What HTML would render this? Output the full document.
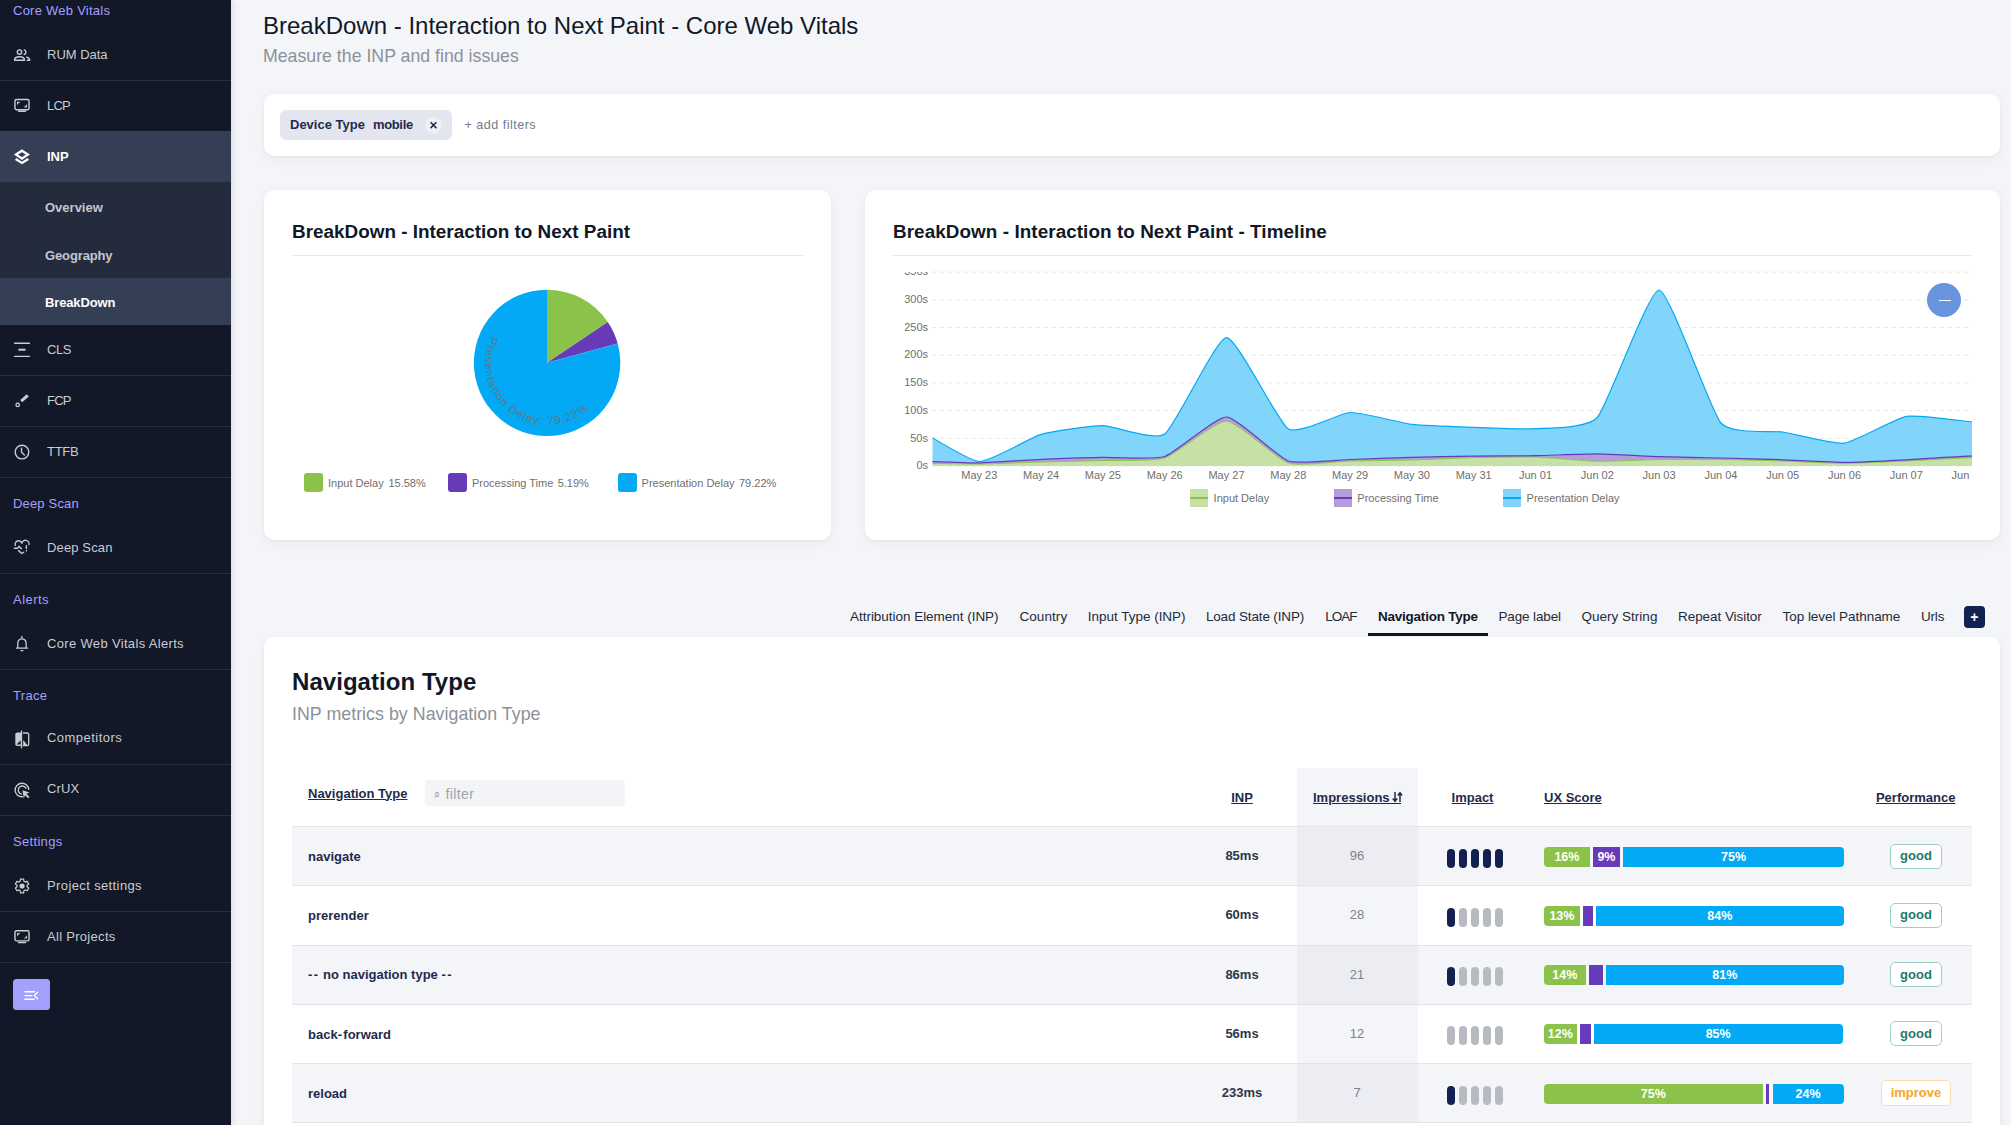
<!DOCTYPE html><html><head><meta charset="utf-8"><style>
html,body{margin:0;padding:0}
body{width:2011px;height:1125px;overflow:hidden;background:#f4f5f9;font-family:"Liberation Sans",sans-serif;position:relative}
.t{position:absolute;line-height:20px;white-space:nowrap}
.abs{position:absolute}
.sb{position:absolute;left:0;top:0;width:231px;height:1125px;background:#121827;box-shadow:1px 0 7px rgba(0,0,0,0.13)}
.div{position:absolute;left:0;width:231px;height:1px;background:#262e3f}
.card{position:absolute;background:#fff;border-radius:10px;box-shadow:0 1px 3px rgba(20,30,60,.06),0 4px 14px rgba(20,30,60,.04)}
</style></head><body>

<div class="sb"></div>
<div class="abs" style="left:0;top:131px;width:231px;height:51px;background:#343e55"></div>
<div class="abs" style="left:0;top:182px;width:231px;height:96px;background:#242b3c"></div>
<div class="abs" style="left:0;top:278px;width:231px;height:47px;background:#343e55"></div>
<div class="div" style="top:80px"></div>
<div class="div" style="top:375px"></div>
<div class="div" style="top:426px"></div>
<div class="div" style="top:477px"></div>
<div class="div" style="top:573px"></div>
<div class="div" style="top:669px"></div>
<div class="div" style="top:764px"></div>
<div class="div" style="top:815px"></div>
<div class="div" style="top:911px"></div>
<div class="div" style="top:962px"></div>
<div class="t" style="left:13px;top:0.8000000000000007px;font-size:13px;color:#a4a0fb;font-weight:normal;letter-spacing:0.253px;">Core Web Vitals</div>
<div class="t" style="left:13px;top:493.8px;font-size:13px;color:#a4a0fb;font-weight:normal;letter-spacing:0.172px;">Deep Scan</div>
<div class="t" style="left:13px;top:590.0px;font-size:13px;color:#a4a0fb;font-weight:normal;letter-spacing:0.474px;">Alerts</div>
<div class="t" style="left:13px;top:685.8px;font-size:13px;color:#a4a0fb;font-weight:normal;letter-spacing:0.313px;">Trace</div>
<div class="t" style="left:13px;top:832.0px;font-size:13px;color:#a4a0fb;font-weight:normal;letter-spacing:0.318px;">Settings</div>
<div class="t" style="left:47px;top:44.6px;font-size:13px;color:#c9ccd3;font-weight:normal;letter-spacing:-0.011px;">RUM Data</div>
<div class="t" style="left:47px;top:95.9px;font-size:13px;color:#c9ccd3;font-weight:normal;letter-spacing:-0.845px;">LCP</div>
<div class="t" style="left:47px;top:339.9px;font-size:13px;color:#c9ccd3;font-weight:normal;letter-spacing:-0.395px;">CLS</div>
<div class="t" style="left:47px;top:390.7px;font-size:13px;color:#c9ccd3;font-weight:normal;letter-spacing:-0.751px;">FCP</div>
<div class="t" style="left:47px;top:441.7px;font-size:13px;color:#c9ccd3;font-weight:normal;letter-spacing:-0.265px;">TTFB</div>
<div class="t" style="left:47px;top:537.6px;font-size:13px;color:#c9ccd3;font-weight:normal;letter-spacing:0.135px;">Deep Scan</div>
<div class="t" style="left:47px;top:633.8px;font-size:13px;color:#c9ccd3;font-weight:normal;letter-spacing:0.334px;">Core Web Vitals Alerts</div>
<div class="t" style="left:47px;top:728.4px;font-size:13px;color:#c9ccd3;font-weight:normal;letter-spacing:0.472px;">Competitors</div>
<div class="t" style="left:47px;top:779.4px;font-size:13px;color:#c9ccd3;font-weight:normal;letter-spacing:0.141px;">CrUX</div>
<div class="t" style="left:47px;top:875.7px;font-size:13px;color:#c9ccd3;font-weight:normal;letter-spacing:0.382px;">Project settings</div>
<div class="t" style="left:47px;top:926.6px;font-size:13px;color:#c9ccd3;font-weight:normal;letter-spacing:0.298px;">All Projects</div>
<div class="t" style="left:47px;top:146.5px;font-size:13px;color:#ffffff;font-weight:bold;">INP</div>
<div class="t" style="left:45px;top:197.5px;font-size:13px;color:#c3c7cf;font-weight:bold;">Overview</div>
<div class="t" style="left:45px;top:245.5px;font-size:13px;color:#c3c7cf;font-weight:bold;letter-spacing:-0.128px;">Geography</div>
<div class="t" style="left:45px;top:293.2px;font-size:13px;color:#ffffff;font-weight:bold;letter-spacing:-0.140px;">BreakDown</div>
<svg class="abs" style="left:0;top:0" width="231" height="1125" viewBox="0 0 231 1125"><g fill="none" stroke="#c9ccd3" stroke-width="1.4" stroke-linecap="round" stroke-linejoin="round"><circle cx="19.5" cy="52.1" r="2.2"/><path d="M14.5 60.3C14.5 57.9 16.6 56.8 19.5 56.8C22.4 56.8 24.5 57.9 24.5 60.3Z"/><path d="M24.2 49.9A2.4 2.4 0 0 1 24.2 54.5"/><path d="M26.6 57.1C28.4 57.6 29.7 58.7 29.7 60.3H27.2"/><g transform="translate(0 0)"><rect x="15" y="99.5" width="14" height="10.2" rx="1.4"/><path d="M18.6 111.3H25.4" stroke-width="1.6"/><path d="M17.6 104V102.4H19.2M26.4 105.2V106.8H24.8" stroke-width="1.2"/></g><g transform="translate(0 831.2)"><rect x="15" y="99.5" width="14" height="10.2" rx="1.4"/><path d="M18.6 111.3H25.4" stroke-width="1.6"/><path d="M17.6 104V102.4H19.2M26.4 105.2V106.8H24.8" stroke-width="1.2"/></g><path d="M14.6 343.3H29.4M14.6 356.4H29.4"/><path d="M18.4 349.7H25.6" stroke-width="2" stroke-linecap="butt"/><path d="M21.2 401.2L27.8 395.4" stroke-width="3" stroke-linecap="butt"/><circle cx="17.7" cy="404.9" r="1.7" stroke-width="1.3"/><circle cx="22" cy="452.1" r="6.8"/><path d="M21.5 448.2V452.3L24.4 455"/><path d="M15.3 545.4A3.4 3.4 0 0 1 21.9 543.2A3.4 3.4 0 0 1 29 544.6"/><path d="M14.3 548.3H17.5L19 546.3L21.3 548.7"/><path d="M18.5 550.6L21.9 553.5L23.7 552.2"/><path d="M26.4 545.8V548.6M26.4 550.8V550.9"/><path d="M21.9 636.5V638M17.8 648V643A4.1 4.1 0 0 1 26.1 643V648M16.4 648.2H27.6M20.9 650.6H22.9" stroke-width="1.3"/><path d="M21.5 732.6H17.1Q15.3 732.6 15.3 734.4V744.2Q15.3 746 17.1 746H21.5Z" fill="#c9ccd3" stroke="none"/><path d="M16.6 744.6L20.8 740.2V744.6Z" fill="#121827" stroke="none"/><path d="M21.5 731V747.8" stroke-width="1.3"/><path d="M23.4 733H27.1Q28.7 733 28.7 734.6V744.1Q28.7 745.7 27.1 745.7H23.4" stroke-width="1.3"/><path d="M23.2 740L27.8 745.8H23.2Z" fill="#c9ccd3" stroke="none"/><path d="M28.7 789.4A6.8 6.8 0 1 0 22.4 796.8"/><path d="M25.9 788.1A4.1 4.1 0 1 0 21.4 794.1"/><path d="M22.4 790.2L29.6 792.6L26.4 793.8L29.5 796.9L28.1 798.3L25 795.2L23.8 798.4Z" fill="#c9ccd3" stroke="none"/><path d="M20.22 881.24L20.48 879.18L23.62 879.18L23.88 881.24L25.26 882.04L27.17 881.23L28.74 883.95L27.09 885.20L27.09 886.80L28.74 888.05L27.17 890.77L25.26 889.96L23.88 890.76L23.62 892.82L20.48 892.82L20.22 890.76L18.84 889.96L16.93 890.77L15.36 888.05L17.01 886.80L17.01 885.20L15.36 883.95L16.93 881.23L18.84 882.04Z" stroke-width="1.3"/><circle cx="22.05" cy="886" r="2.6" fill="#c9ccd3" stroke="none"/></g><g fill="none" stroke="#fff" stroke-width="2.3" stroke-linejoin="miter"><path d="M21.95 150.7L27.9 154.6L21.95 158.5L16 154.6Z"/><path d="M15.6 159L21.95 162.9L28.3 159"/></g><rect x="13" y="979" width="37" height="31" rx="3.5" fill="#a3a0fd"/><g stroke="#fff" stroke-width="1.4" stroke-linecap="round" stroke-linejoin="round" fill="none"><path d="M24.9 991.7H34.3M24.9 995.6H31.9M24.9 999.2H34.3M37.5 992.3L34.3 995.6L37.5 998.8"/></g></svg>
<div class="t" style="left:263px;top:15.5px;font-size:24px;color:#111827;font-weight:normal;">BreakDown - Interaction to Next Paint - Core Web Vitals</div>
<div class="t" style="left:263px;top:45.8px;font-size:17.7px;color:#8b919a;font-weight:normal;letter-spacing:0.017px;">Measure the INP and find issues</div>
<div class="card" style="left:264px;top:94px;width:1736px;height:62px"></div>
<div class="abs" style="left:280px;top:110px;width:172px;height:30px;border-radius:6px;background:#e3e6ee"></div>
<div class="t" style="left:290px;top:114.5px;font-size:13px;color:#1f2b4d;font-weight:bold;">Device Type</div>
<div class="t" style="left:372.9px;top:114.5px;font-size:13px;color:#1f2b4d;font-weight:bold;letter-spacing:-0.319px;">mobile</div>
<div class="abs" style="left:424.9px;top:116.5px;width:17.2px;height:17.2px;border-radius:50%;background:#eef0f4"></div>
<svg class="abs" style="left:0;top:0" width="500" height="200"><path d="M430.6 122.3L436.4 128.1M436.4 122.3L430.6 128.1" stroke="#1f2b4d" stroke-width="1.5"/></svg>
<div class="t" style="left:464.5px;top:114.8px;font-size:12.6px;color:#737b8b;font-weight:normal;letter-spacing:0.476px;">+ add filters</div>
<div class="card" style="left:264px;top:190px;width:567px;height:350px"></div>
<div class="t" style="left:292px;top:221.5px;font-size:18.9px;color:#111827;font-weight:bold;">BreakDown - Interaction to Next Paint</div>
<div class="abs" style="left:292px;top:255px;width:511px;height:1px;background:#e5e7eb"></div>
<svg class="abs" style="left:0;top:0" width="2011" height="1125" viewBox="0 0 2011 1125"><path d="M547.05 362.85L547.05 289.65A73.2 73.2 0 0 1 607.80 322.01Z" fill="#8bc34a"/><path d="M547.05 362.85L607.80 322.01A73.2 73.2 0 0 1 617.68 343.62Z" fill="#673ab7"/><path d="M547.05 362.85L617.68 343.62A73.2 73.2 0 1 1 547.05 289.65Z" fill="#03a9f4"/><path id="lp" d="M491.09 336.16A62 62 0 0 0 600.74 393.85" fill="none"/><text font-family="Liberation Sans" font-size="11.5" letter-spacing="1.08" fill="#6e6e6e" fill-opacity="0.85"><textPath href="#lp">Presentation Delay: 79.22%</textPath></text></svg>
<div class="abs" style="left:304px;top:473px;width:19px;height:19px;border-radius:3px;background:#8bc34a"></div>
<div class="t" style="left:328px;top:473.0px;font-size:11px;color:#6f6f6f;font-weight:normal;">Input Delay</div>
<div class="t" style="left:388.4px;top:473.0px;font-size:11px;color:#6f6f6f;font-weight:normal;">15.58%</div>
<div class="abs" style="left:448px;top:473px;width:19px;height:19px;border-radius:3px;background:#673ab7"></div>
<div class="t" style="left:472px;top:473.0px;font-size:11px;color:#6f6f6f;font-weight:normal;">Processing Time</div>
<div class="t" style="left:557.7px;top:473.0px;font-size:11px;color:#6f6f6f;font-weight:normal;">5.19%</div>
<div class="abs" style="left:617.6px;top:473px;width:19px;height:19px;border-radius:3px;background:#03a9f4"></div>
<div class="t" style="left:641.6px;top:473.0px;font-size:11px;color:#6f6f6f;font-weight:normal;">Presentation Delay</div>
<div class="t" style="left:739px;top:473.0px;font-size:11px;color:#6f6f6f;font-weight:normal;">79.22%</div>
<div class="card" style="left:865px;top:190px;width:1135px;height:350px"></div>
<div class="t" style="left:893px;top:221.5px;font-size:18.9px;color:#111827;font-weight:bold;letter-spacing:0.058px;">BreakDown - Interaction to Next Paint - Timeline</div>
<div class="abs" style="left:893px;top:255px;width:1079px;height:1px;background:#e5e7eb"></div>
<svg class="abs" style="left:0;top:0" width="2011" height="1125" viewBox="0 0 2011 1125"><defs><clipPath id="pc"><rect x="932.5" y="271" width="1039.5" height="196"/></clipPath></defs><line x1="932.5" x2="1972" y1="466.0" y2="466.0" stroke="#e4e4e4" stroke-width="1" stroke-dasharray="4 4"/><line x1="932.5" x2="1972" y1="438.3" y2="438.3" stroke="#e4e4e4" stroke-width="1" stroke-dasharray="4 4"/><line x1="932.5" x2="1972" y1="410.6" y2="410.6" stroke="#e4e4e4" stroke-width="1" stroke-dasharray="4 4"/><line x1="932.5" x2="1972" y1="382.9" y2="382.9" stroke="#e4e4e4" stroke-width="1" stroke-dasharray="4 4"/><line x1="932.5" x2="1972" y1="355.2" y2="355.2" stroke="#e4e4e4" stroke-width="1" stroke-dasharray="4 4"/><line x1="932.5" x2="1972" y1="327.5" y2="327.5" stroke="#e4e4e4" stroke-width="1" stroke-dasharray="4 4"/><line x1="932.5" x2="1972" y1="299.8" y2="299.8" stroke="#e4e4e4" stroke-width="1" stroke-dasharray="4 4"/><line x1="932.5" x2="1972" y1="272.1" y2="272.1" stroke="#e4e4e4" stroke-width="1" stroke-dasharray="4 4"/><g clip-path="url(#pc)"><path d="M917.50 463.00C922.65 463.08 969.00 464.08 979.30 464.00C989.60 463.92 1030.80 462.29 1041.10 462.00C1051.40 461.71 1092.60 460.83 1102.90 460.50C1113.20 460.17 1154.40 461.28 1164.70 458.00C1175.00 454.72 1216.20 420.68 1226.50 421.10C1236.80 421.52 1278.00 459.68 1288.30 463.00C1298.60 466.32 1339.80 461.25 1350.10 461.00C1360.40 460.75 1401.60 460.28 1411.90 460.00C1422.20 459.72 1463.40 457.85 1473.70 457.60C1484.00 457.35 1525.20 456.69 1535.50 457.00C1545.80 457.31 1587.00 461.09 1597.30 461.30C1607.60 461.51 1648.80 459.65 1659.10 459.50C1669.40 459.35 1710.60 459.38 1720.90 459.50C1731.20 459.62 1772.40 460.68 1782.70 461.00C1793.00 461.32 1834.20 463.30 1844.50 463.30C1854.80 463.30 1896.00 461.45 1906.30 461.00C1916.60 460.55 1957.80 458.15 1968.10 457.90C1978.40 457.65 2024.75 457.99 2029.90 458.00L2029.8999999999999 466L917.5 466Z" fill="#c5e1a5"/><path d="M917.50 461.00C922.65 461.16 969.00 463.04 979.30 462.90C989.60 462.76 1030.80 459.77 1041.10 459.30C1051.40 458.83 1092.60 457.53 1102.90 457.30C1113.20 457.07 1154.40 459.86 1164.70 456.50C1175.00 453.14 1216.20 416.62 1226.50 417.00C1236.80 417.38 1278.00 457.46 1288.30 461.00C1298.60 464.54 1339.80 459.81 1350.10 459.50C1360.40 459.19 1401.60 457.58 1411.90 457.30C1422.20 457.02 1463.40 456.23 1473.70 456.10C1484.00 455.97 1525.20 455.88 1535.50 455.70C1545.80 455.52 1587.00 453.82 1597.30 453.90C1607.60 453.98 1648.80 456.36 1659.10 456.70C1669.40 457.04 1710.60 457.74 1720.90 458.00C1731.20 458.26 1772.40 459.43 1782.70 459.80C1793.00 460.17 1834.20 462.40 1844.50 462.40C1854.80 462.40 1896.00 460.32 1906.30 459.80C1916.60 459.28 1957.80 456.42 1968.10 456.10C1978.40 455.78 2024.75 456.01 2029.90 456.00L2029.90 458.00C2024.75 457.99 1978.40 457.65 1968.10 457.90C1957.80 458.15 1916.60 460.55 1906.30 461.00C1896.00 461.45 1854.80 463.30 1844.50 463.30C1834.20 463.30 1793.00 461.32 1782.70 461.00C1772.40 460.68 1731.20 459.62 1720.90 459.50C1710.60 459.38 1669.40 459.35 1659.10 459.50C1648.80 459.65 1607.60 461.51 1597.30 461.30C1587.00 461.09 1545.80 457.31 1535.50 457.00C1525.20 456.69 1484.00 457.35 1473.70 457.60C1463.40 457.85 1422.20 459.72 1411.90 460.00C1401.60 460.28 1360.40 460.75 1350.10 461.00C1339.80 461.25 1298.60 466.32 1288.30 463.00C1278.00 459.68 1236.80 421.52 1226.50 421.10C1216.20 420.68 1175.00 454.72 1164.70 458.00C1154.40 461.28 1113.20 460.17 1102.90 460.50C1092.60 460.83 1051.40 461.71 1041.10 462.00C1030.80 462.29 989.60 463.92 979.30 464.00C969.00 464.08 922.65 463.08 917.50 463.00Z" fill="#b39ddb"/><path d="M917.50 429.00C922.65 431.72 969.00 461.15 979.30 461.60C989.60 462.05 1030.80 437.40 1041.10 434.40C1051.40 431.40 1092.60 425.62 1102.90 425.60C1113.20 425.58 1154.40 441.43 1164.70 434.10C1175.00 426.77 1216.20 338.03 1226.50 337.60C1236.80 337.17 1278.00 422.66 1288.30 428.90C1298.60 435.14 1339.80 412.88 1350.10 412.50C1360.40 412.12 1401.60 423.16 1411.90 424.40C1422.20 425.64 1463.40 427.04 1473.70 427.40C1484.00 427.76 1525.20 429.52 1535.50 428.70C1545.80 427.88 1587.00 429.06 1597.30 417.50C1607.60 405.94 1648.80 289.54 1659.10 290.00C1669.40 290.46 1710.60 411.17 1720.90 423.00C1731.20 434.83 1772.40 430.32 1782.70 432.00C1793.00 433.68 1834.20 444.50 1844.50 443.20C1854.80 441.90 1896.00 418.21 1906.30 416.40C1916.60 414.59 1957.80 420.37 1968.10 421.50C1978.40 422.63 2024.75 429.29 2029.90 430.00L2029.90 456.00C2024.75 456.01 1978.40 455.78 1968.10 456.10C1957.80 456.42 1916.60 459.28 1906.30 459.80C1896.00 460.32 1854.80 462.40 1844.50 462.40C1834.20 462.40 1793.00 460.17 1782.70 459.80C1772.40 459.43 1731.20 458.26 1720.90 458.00C1710.60 457.74 1669.40 457.04 1659.10 456.70C1648.80 456.36 1607.60 453.98 1597.30 453.90C1587.00 453.82 1545.80 455.52 1535.50 455.70C1525.20 455.88 1484.00 455.97 1473.70 456.10C1463.40 456.23 1422.20 457.02 1411.90 457.30C1401.60 457.58 1360.40 459.19 1350.10 459.50C1339.80 459.81 1298.60 464.54 1288.30 461.00C1278.00 457.46 1236.80 417.38 1226.50 417.00C1216.20 416.62 1175.00 453.14 1164.70 456.50C1154.40 459.86 1113.20 457.07 1102.90 457.30C1092.60 457.53 1051.40 458.83 1041.10 459.30C1030.80 459.77 989.60 462.76 979.30 462.90C969.00 463.04 922.65 461.16 917.50 461.00Z" fill="#81d4fa"/><path d="M917.50 463.00C922.65 463.08 969.00 464.08 979.30 464.00C989.60 463.92 1030.80 462.29 1041.10 462.00C1051.40 461.71 1092.60 460.83 1102.90 460.50C1113.20 460.17 1154.40 461.28 1164.70 458.00C1175.00 454.72 1216.20 420.68 1226.50 421.10C1236.80 421.52 1278.00 459.68 1288.30 463.00C1298.60 466.32 1339.80 461.25 1350.10 461.00C1360.40 460.75 1401.60 460.28 1411.90 460.00C1422.20 459.72 1463.40 457.85 1473.70 457.60C1484.00 457.35 1525.20 456.69 1535.50 457.00C1545.80 457.31 1587.00 461.09 1597.30 461.30C1607.60 461.51 1648.80 459.65 1659.10 459.50C1669.40 459.35 1710.60 459.38 1720.90 459.50C1731.20 459.62 1772.40 460.68 1782.70 461.00C1793.00 461.32 1834.20 463.30 1844.50 463.30C1854.80 463.30 1896.00 461.45 1906.30 461.00C1916.60 460.55 1957.80 458.15 1968.10 457.90C1978.40 457.65 2024.75 457.99 2029.90 458.00" fill="none" stroke="#8bc34a" stroke-width="1"/><path d="M917.50 461.00C922.65 461.16 969.00 463.04 979.30 462.90C989.60 462.76 1030.80 459.77 1041.10 459.30C1051.40 458.83 1092.60 457.53 1102.90 457.30C1113.20 457.07 1154.40 459.86 1164.70 456.50C1175.00 453.14 1216.20 416.62 1226.50 417.00C1236.80 417.38 1278.00 457.46 1288.30 461.00C1298.60 464.54 1339.80 459.81 1350.10 459.50C1360.40 459.19 1401.60 457.58 1411.90 457.30C1422.20 457.02 1463.40 456.23 1473.70 456.10C1484.00 455.97 1525.20 455.88 1535.50 455.70C1545.80 455.52 1587.00 453.82 1597.30 453.90C1607.60 453.98 1648.80 456.36 1659.10 456.70C1669.40 457.04 1710.60 457.74 1720.90 458.00C1731.20 458.26 1772.40 459.43 1782.70 459.80C1793.00 460.17 1834.20 462.40 1844.50 462.40C1854.80 462.40 1896.00 460.32 1906.30 459.80C1916.60 459.28 1957.80 456.42 1968.10 456.10C1978.40 455.78 2024.75 456.01 2029.90 456.00" fill="none" stroke="#673ab7" stroke-width="1.2"/><path d="M917.50 429.00C922.65 431.72 969.00 461.15 979.30 461.60C989.60 462.05 1030.80 437.40 1041.10 434.40C1051.40 431.40 1092.60 425.62 1102.90 425.60C1113.20 425.58 1154.40 441.43 1164.70 434.10C1175.00 426.77 1216.20 338.03 1226.50 337.60C1236.80 337.17 1278.00 422.66 1288.30 428.90C1298.60 435.14 1339.80 412.88 1350.10 412.50C1360.40 412.12 1401.60 423.16 1411.90 424.40C1422.20 425.64 1463.40 427.04 1473.70 427.40C1484.00 427.76 1525.20 429.52 1535.50 428.70C1545.80 427.88 1587.00 429.06 1597.30 417.50C1607.60 405.94 1648.80 289.54 1659.10 290.00C1669.40 290.46 1710.60 411.17 1720.90 423.00C1731.20 434.83 1772.40 430.32 1782.70 432.00C1793.00 433.68 1834.20 444.50 1844.50 443.20C1854.80 441.90 1896.00 418.21 1906.30 416.40C1916.60 414.59 1957.80 420.37 1968.10 421.50C1978.40 422.63 2024.75 429.29 2029.90 430.00" fill="none" stroke="#03a9f4" stroke-width="1.2"/></g></svg>
<div class="abs" style="left:880px;top:271.8px;width:60px;height:210px;overflow:hidden">
<div class="t" style="left:0;width:48px;text-align:right;top:183.5px;font-size:11px;color:#6f6f6f">0s</div>
<div class="t" style="left:0;width:48px;text-align:right;top:155.8px;font-size:11px;color:#6f6f6f">50s</div>
<div class="t" style="left:0;width:48px;text-align:right;top:128.10000000000002px;font-size:11px;color:#6f6f6f">100s</div>
<div class="t" style="left:0;width:48px;text-align:right;top:100.39999999999996px;font-size:11px;color:#6f6f6f">150s</div>
<div class="t" style="left:0;width:48px;text-align:right;top:72.69999999999997px;font-size:11px;color:#6f6f6f">200s</div>
<div class="t" style="left:0;width:48px;text-align:right;top:44.999999999999986px;font-size:11px;color:#6f6f6f">250s</div>
<div class="t" style="left:0;width:48px;text-align:right;top:17.3px;font-size:11px;color:#6f6f6f">300s</div>
<div class="t" style="left:0;width:48px;text-align:right;top:-10.399999999999988px;font-size:11px;color:#6f6f6f">350s</div>
</div>
<div class="abs" style="left:932px;top:460px;width:1040px;height:30px;overflow:hidden">
<div class="t" style="left:7.2999999999999545px;width:80px;text-align:center;top:5px;font-size:11px;color:#6f6f6f">May 23</div>
<div class="t" style="left:69.09999999999991px;width:80px;text-align:center;top:5px;font-size:11px;color:#6f6f6f">May 24</div>
<div class="t" style="left:130.89999999999986px;width:80px;text-align:center;top:5px;font-size:11px;color:#6f6f6f">May 25</div>
<div class="t" style="left:192.69999999999982px;width:80px;text-align:center;top:5px;font-size:11px;color:#6f6f6f">May 26</div>
<div class="t" style="left:254.5px;width:80px;text-align:center;top:5px;font-size:11px;color:#6f6f6f">May 27</div>
<div class="t" style="left:316.29999999999995px;width:80px;text-align:center;top:5px;font-size:11px;color:#6f6f6f">May 28</div>
<div class="t" style="left:378.0999999999999px;width:80px;text-align:center;top:5px;font-size:11px;color:#6f6f6f">May 29</div>
<div class="t" style="left:439.89999999999986px;width:80px;text-align:center;top:5px;font-size:11px;color:#6f6f6f">May 30</div>
<div class="t" style="left:501.6999999999998px;width:80px;text-align:center;top:5px;font-size:11px;color:#6f6f6f">May 31</div>
<div class="t" style="left:563.5px;width:80px;text-align:center;top:5px;font-size:11px;color:#6f6f6f">Jun 01</div>
<div class="t" style="left:625.3px;width:80px;text-align:center;top:5px;font-size:11px;color:#6f6f6f">Jun 02</div>
<div class="t" style="left:687.0999999999999px;width:80px;text-align:center;top:5px;font-size:11px;color:#6f6f6f">Jun 03</div>
<div class="t" style="left:748.8999999999999px;width:80px;text-align:center;top:5px;font-size:11px;color:#6f6f6f">Jun 04</div>
<div class="t" style="left:810.6999999999998px;width:80px;text-align:center;top:5px;font-size:11px;color:#6f6f6f">Jun 05</div>
<div class="t" style="left:872.5px;width:80px;text-align:center;top:5px;font-size:11px;color:#6f6f6f">Jun 06</div>
<div class="t" style="left:934.3px;width:80px;text-align:center;top:5px;font-size:11px;color:#6f6f6f">Jun 07</div>
<div class="t" style="left:996.0999999999999px;width:80px;text-align:center;top:5px;font-size:11px;color:#6f6f6f">Jun 08</div>
</div>
<div class="abs" style="left:1190.3px;top:489px;width:18px;height:18px;background:#c5e1a5"></div>
<div class="abs" style="left:1190.3px;top:497px;width:18px;height:2px;background:#8bc34a"></div>
<div class="t" style="left:1213.6px;top:488.0px;font-size:11px;color:#6f6f6f;font-weight:normal;">Input Delay</div>
<div class="abs" style="left:1334px;top:489px;width:18px;height:18px;background:#b39ddb"></div>
<div class="abs" style="left:1334px;top:497px;width:18px;height:2px;background:#673ab7"></div>
<div class="t" style="left:1357.3px;top:488.0px;font-size:11px;color:#6f6f6f;font-weight:normal;">Processing Time</div>
<div class="abs" style="left:1503.3px;top:489px;width:18px;height:18px;background:#81d4fa"></div>
<div class="abs" style="left:1503.3px;top:497px;width:18px;height:2px;background:#03a9f4"></div>
<div class="t" style="left:1526.6px;top:488.0px;font-size:11px;color:#6f6f6f;font-weight:normal;">Presentation Delay</div>
<div class="abs" style="left:1927px;top:283px;width:34.4px;height:34.4px;border-radius:50%;background:#6794dc"></div>
<div class="abs" style="left:1938.5px;top:300px;width:12px;height:1px;background:#fff"></div>
<div class="t" style="left:850px;top:606.5px;font-size:13.5px;color:#1f2937;font-weight:normal;letter-spacing:-0.030px;">Attribution Element (INP)</div>
<div class="t" style="left:1019.4px;top:606.5px;font-size:13.5px;color:#1f2937;font-weight:normal;letter-spacing:0.088px;">Country</div>
<div class="t" style="left:1087.8px;top:606.5px;font-size:13.5px;color:#1f2937;font-weight:normal;letter-spacing:-0.017px;">Input Type (INP)</div>
<div class="t" style="left:1205.9px;top:606.5px;font-size:13.5px;color:#1f2937;font-weight:normal;letter-spacing:-0.144px;">Load State (INP)</div>
<div class="t" style="left:1325.2px;top:606.5px;font-size:13.5px;color:#1f2937;font-weight:normal;letter-spacing:-1.020px;">LOAF</div>
<div class="t" style="left:1378px;top:606.5px;font-size:13.5px;color:#111827;font-weight:bold;letter-spacing:-0.234px;">Navigation Type</div>
<div class="t" style="left:1498.5px;top:606.5px;font-size:13.5px;color:#1f2937;font-weight:normal;letter-spacing:-0.145px;">Page label</div>
<div class="t" style="left:1581.5px;top:606.5px;font-size:13.5px;color:#1f2937;font-weight:normal;letter-spacing:0.011px;">Query String</div>
<div class="t" style="left:1678px;top:606.5px;font-size:13.5px;color:#1f2937;font-weight:normal;letter-spacing:-0.058px;">Repeat Visitor</div>
<div class="t" style="left:1782.6px;top:606.5px;font-size:13.5px;color:#1f2937;font-weight:normal;letter-spacing:-0.052px;">Top level Pathname</div>
<div class="t" style="left:1920.9px;top:606.5px;font-size:13.5px;color:#1f2937;font-weight:normal;letter-spacing:-0.165px;">Urls</div>
<div class="abs" style="left:1368px;top:633px;width:120px;height:3px;background:#111827"></div>
<div class="abs" style="left:1963.5px;top:606px;width:21.5px;height:21.5px;border-radius:4px;background:#12214f"></div>
<div class="t" style="left:1964.25px;width:20px;text-align:center;top:607.0px;font-size:14px;color:#fff;font-weight:bold;">+</div>
<div class="card" style="left:264px;top:637px;width:1736px;height:520px"></div>
<div class="t" style="left:292px;top:672.2px;font-size:24px;color:#111827;font-weight:bold;letter-spacing:0.051px;">Navigation Type</div>
<div class="t" style="left:292px;top:704.0px;font-size:17.8px;color:#8b919a;font-weight:normal;letter-spacing:0.036px;">INP metrics by Navigation Type</div>
<div class="abs" style="left:1297px;top:768px;width:121px;height:58px;background:#f4f5f9"></div>
<div class="t" style="left:308px;top:783.5px;font-size:13px;color:#1f2b4d;font-weight:bold;"><u>Navigation Type</u></div>
<div class="abs" style="left:425px;top:780px;width:200px;height:26px;border-radius:4px;background:#f3f4f8"></div>
<div class="t" style="left:434px;top:783.5px;font-size:11px;color:#8b919a;font-weight:normal;">&#8981;</div>
<div class="t" style="left:445.5px;top:783.5px;font-size:14px;color:#9ca3af;font-weight:normal;letter-spacing:0.370px;">filter</div>
<div class="t" style="left:1192.0px;width:100px;text-align:center;top:787.5px;font-size:13px;color:#1f2b4d;font-weight:bold;"><u>INP</u></div>
<div class="t" style="left:1313px;top:787.5px;font-size:13px;color:#1f2b4d;font-weight:bold;"><u>Impressions</u></div>
<div class="abs" style="left:1389px;top:803px;width:12.4px;height:1px;background:#1f2b4d"></div>
<svg class="abs" style="left:1392px;top:791px" width="11" height="12" viewBox="0 0 11 12" fill="none" stroke="#1f2b4d" stroke-width="1.5"><path d="M3 1v9M0.8 7.5L3 10.2 5.2 7.5M8 11V2M5.8 4.5L8 1.8 10.2 4.5"/></svg>
<div class="t" style="left:1422.5px;width:100px;text-align:center;top:787.5px;font-size:13px;color:#1f2b4d;font-weight:bold;"><u>Impact</u></div>
<div class="t" style="left:1544px;top:787.5px;font-size:13px;color:#1f2b4d;font-weight:bold;"><u>UX Score</u></div>
<div class="t" style="left:1845.7px;width:140px;text-align:center;top:787.5px;font-size:13px;color:#1f2b4d;font-weight:bold;"><u>Performance</u></div>
<div class="abs" style="left:292px;top:826px;width:1680px;height:1px;background:#e2e4ea"></div>
<div class="abs" style="left:292px;top:827.0px;width:1680px;height:58.25px;background:#f4f5f9"></div>
<div class="abs" style="left:1297px;top:827.0px;width:121px;height:58.25px;background:#ecedf2"></div>
<div class="abs" style="left:292px;top:885.25px;width:1680px;height:1px;background:#e2e4ea"></div>
<div class="t" style="left:308px;top:846.8px;font-size:13px;color:#1f2b4d;font-weight:bold;">navigate</div>
<div class="t" style="left:1192.0px;width:100px;text-align:center;top:846.0px;font-size:13px;color:#2d3748;font-weight:bold;">85ms</div>
<div class="t" style="left:1307.0px;width:100px;text-align:center;top:846.0px;font-size:13px;color:#7b8190;font-weight:normal;">96</div>
<div class="abs" style="left:1447px;top:848.5px;width:8px;height:19px;border-radius:4px;background:#12214f"></div>
<div class="abs" style="left:1459px;top:848.5px;width:8px;height:19px;border-radius:4px;background:#12214f"></div>
<div class="abs" style="left:1471px;top:848.5px;width:8px;height:19px;border-radius:4px;background:#12214f"></div>
<div class="abs" style="left:1483px;top:848.5px;width:8px;height:19px;border-radius:4px;background:#12214f"></div>
<div class="abs" style="left:1495px;top:848.5px;width:8px;height:19px;border-radius:4px;background:#12214f"></div>
<div class="abs" style="left:1544px;top:846.5px;width:45.8px;height:20px;border-radius:4px 0 0 4px;background:#8bc34a"></div>
<div class="t" style="left:1526.9px;width:80px;text-align:center;top:846.5px;font-size:12.5px;color:#fff;font-weight:bold;">16%</div>
<div class="abs" style="left:1592.9px;top:846.5px;width:27.1px;height:20px;border-radius:0;background:#673ab7"></div>
<div class="t" style="left:1566.45px;width:80px;text-align:center;top:846.5px;font-size:12.5px;color:#fff;font-weight:bold;">9%</div>
<div class="abs" style="left:1623.1000000000001px;top:846.5px;width:221px;height:20px;border-radius:0 4px 4px 0;background:#03a9f4"></div>
<div class="t" style="left:1693.6000000000001px;width:80px;text-align:center;top:846.5px;font-size:12.5px;color:#fff;font-weight:bold;">75%</div>
<div class="abs" style="left:1890.3px;top:843.5px;width:49.4px;height:23px;border:1px solid #9ed0c6;border-radius:5px;background:#fff"></div>
<div class="t" style="left:1886.0px;width:60px;text-align:center;top:846.0px;font-size:13px;color:#1f7a6e;font-weight:bold;">good</div>
<div class="abs" style="left:292px;top:886.25px;width:1680px;height:58.25px;background:#ffffff"></div>
<div class="abs" style="left:1297px;top:886.25px;width:121px;height:58.25px;background:#f4f5f9"></div>
<div class="abs" style="left:292px;top:944.5px;width:1680px;height:1px;background:#e2e4ea"></div>
<div class="t" style="left:308px;top:906.05px;font-size:13px;color:#1f2b4d;font-weight:bold;">prerender</div>
<div class="t" style="left:1192.0px;width:100px;text-align:center;top:905.25px;font-size:13px;color:#2d3748;font-weight:bold;">60ms</div>
<div class="t" style="left:1307.0px;width:100px;text-align:center;top:905.25px;font-size:13px;color:#7b8190;font-weight:normal;">28</div>
<div class="abs" style="left:1447px;top:907.75px;width:8px;height:19px;border-radius:4px;background:#12214f"></div>
<div class="abs" style="left:1459px;top:907.75px;width:8px;height:19px;border-radius:4px;background:#b8bac1"></div>
<div class="abs" style="left:1471px;top:907.75px;width:8px;height:19px;border-radius:4px;background:#b8bac1"></div>
<div class="abs" style="left:1483px;top:907.75px;width:8px;height:19px;border-radius:4px;background:#b8bac1"></div>
<div class="abs" style="left:1495px;top:907.75px;width:8px;height:19px;border-radius:4px;background:#b8bac1"></div>
<div class="abs" style="left:1544px;top:905.75px;width:35.8px;height:20px;border-radius:4px 0 0 4px;background:#8bc34a"></div>
<div class="t" style="left:1521.9px;width:80px;text-align:center;top:905.75px;font-size:12.5px;color:#fff;font-weight:bold;">13%</div>
<div class="abs" style="left:1582.9px;top:905.75px;width:9.8px;height:20px;border-radius:0;background:#673ab7"></div>
<div class="abs" style="left:1595.8000000000002px;top:905.75px;width:248px;height:20px;border-radius:0 4px 4px 0;background:#03a9f4"></div>
<div class="t" style="left:1679.8000000000002px;width:80px;text-align:center;top:905.75px;font-size:12.5px;color:#fff;font-weight:bold;">84%</div>
<div class="abs" style="left:1890.3px;top:902.75px;width:49.4px;height:23px;border:1px solid #9ed0c6;border-radius:5px;background:#fff"></div>
<div class="t" style="left:1886.0px;width:60px;text-align:center;top:905.25px;font-size:13px;color:#1f7a6e;font-weight:bold;">good</div>
<div class="abs" style="left:292px;top:945.5px;width:1680px;height:58.25px;background:#f4f5f9"></div>
<div class="abs" style="left:1297px;top:945.5px;width:121px;height:58.25px;background:#ecedf2"></div>
<div class="abs" style="left:292px;top:1003.75px;width:1680px;height:1px;background:#e2e4ea"></div>
<div class="t" style="left:308px;top:965.3px;font-size:13px;color:#1f2b4d;font-weight:bold;"><span style="letter-spacing:1.35px">-</span><span style="letter-spacing:1.35px">-</span> no navigation type <span style="letter-spacing:1.35px">-</span><span style="letter-spacing:1.35px">-</span></div>
<div class="t" style="left:1192.0px;width:100px;text-align:center;top:964.5px;font-size:13px;color:#2d3748;font-weight:bold;">86ms</div>
<div class="t" style="left:1307.0px;width:100px;text-align:center;top:964.5px;font-size:13px;color:#7b8190;font-weight:normal;">21</div>
<div class="abs" style="left:1447px;top:967.0px;width:8px;height:19px;border-radius:4px;background:#12214f"></div>
<div class="abs" style="left:1459px;top:967.0px;width:8px;height:19px;border-radius:4px;background:#b8bac1"></div>
<div class="abs" style="left:1471px;top:967.0px;width:8px;height:19px;border-radius:4px;background:#b8bac1"></div>
<div class="abs" style="left:1483px;top:967.0px;width:8px;height:19px;border-radius:4px;background:#b8bac1"></div>
<div class="abs" style="left:1495px;top:967.0px;width:8px;height:19px;border-radius:4px;background:#b8bac1"></div>
<div class="abs" style="left:1544px;top:965.0px;width:41.7px;height:20px;border-radius:4px 0 0 4px;background:#8bc34a"></div>
<div class="t" style="left:1524.85px;width:80px;text-align:center;top:965.0px;font-size:12.5px;color:#fff;font-weight:bold;">14%</div>
<div class="abs" style="left:1588.8px;top:965.0px;width:13.9px;height:20px;border-radius:0;background:#673ab7"></div>
<div class="abs" style="left:1605.8px;top:965.0px;width:238px;height:20px;border-radius:0 4px 4px 0;background:#03a9f4"></div>
<div class="t" style="left:1684.8px;width:80px;text-align:center;top:965.0px;font-size:12.5px;color:#fff;font-weight:bold;">81%</div>
<div class="abs" style="left:1890.3px;top:962.0px;width:49.4px;height:23px;border:1px solid #9ed0c6;border-radius:5px;background:#fff"></div>
<div class="t" style="left:1886.0px;width:60px;text-align:center;top:964.5px;font-size:13px;color:#1f7a6e;font-weight:bold;">good</div>
<div class="abs" style="left:292px;top:1004.75px;width:1680px;height:58.25px;background:#ffffff"></div>
<div class="abs" style="left:1297px;top:1004.75px;width:121px;height:58.25px;background:#f4f5f9"></div>
<div class="abs" style="left:292px;top:1063.0px;width:1680px;height:1px;background:#e2e4ea"></div>
<div class="t" style="left:308px;top:1024.55px;font-size:13px;color:#1f2b4d;font-weight:bold;">back<span style="letter-spacing:1.35px">-</span>forward</div>
<div class="t" style="left:1192.0px;width:100px;text-align:center;top:1023.75px;font-size:13px;color:#2d3748;font-weight:bold;">56ms</div>
<div class="t" style="left:1307.0px;width:100px;text-align:center;top:1023.75px;font-size:13px;color:#7b8190;font-weight:normal;">12</div>
<div class="abs" style="left:1447px;top:1026.25px;width:8px;height:19px;border-radius:4px;background:#b8bac1"></div>
<div class="abs" style="left:1459px;top:1026.25px;width:8px;height:19px;border-radius:4px;background:#b8bac1"></div>
<div class="abs" style="left:1471px;top:1026.25px;width:8px;height:19px;border-radius:4px;background:#b8bac1"></div>
<div class="abs" style="left:1483px;top:1026.25px;width:8px;height:19px;border-radius:4px;background:#b8bac1"></div>
<div class="abs" style="left:1495px;top:1026.25px;width:8px;height:19px;border-radius:4px;background:#b8bac1"></div>
<div class="abs" style="left:1544px;top:1024.25px;width:32.7px;height:20px;border-radius:4px 0 0 4px;background:#8bc34a"></div>
<div class="t" style="left:1520.35px;width:80px;text-align:center;top:1024.25px;font-size:12.5px;color:#fff;font-weight:bold;">12%</div>
<div class="abs" style="left:1579.8px;top:1024.25px;width:10.8px;height:20px;border-radius:0;background:#673ab7"></div>
<div class="abs" style="left:1593.7px;top:1024.25px;width:249px;height:20px;border-radius:0 4px 4px 0;background:#03a9f4"></div>
<div class="t" style="left:1678.2px;width:80px;text-align:center;top:1024.25px;font-size:12.5px;color:#fff;font-weight:bold;">85%</div>
<div class="abs" style="left:1890.3px;top:1021.25px;width:49.4px;height:23px;border:1px solid #9ed0c6;border-radius:5px;background:#fff"></div>
<div class="t" style="left:1886.0px;width:60px;text-align:center;top:1023.75px;font-size:13px;color:#1f7a6e;font-weight:bold;">good</div>
<div class="abs" style="left:292px;top:1064.0px;width:1680px;height:58.25px;background:#f4f5f9"></div>
<div class="abs" style="left:1297px;top:1064.0px;width:121px;height:58.25px;background:#ecedf2"></div>
<div class="abs" style="left:292px;top:1122.25px;width:1680px;height:1px;background:#e2e4ea"></div>
<div class="t" style="left:308px;top:1083.8px;font-size:13px;color:#1f2b4d;font-weight:bold;">reload</div>
<div class="t" style="left:1192.0px;width:100px;text-align:center;top:1083.0px;font-size:13px;color:#2d3748;font-weight:bold;">233ms</div>
<div class="t" style="left:1307.0px;width:100px;text-align:center;top:1083.0px;font-size:13px;color:#7b8190;font-weight:normal;">7</div>
<div class="abs" style="left:1447px;top:1085.5px;width:8px;height:19px;border-radius:4px;background:#12214f"></div>
<div class="abs" style="left:1459px;top:1085.5px;width:8px;height:19px;border-radius:4px;background:#b8bac1"></div>
<div class="abs" style="left:1471px;top:1085.5px;width:8px;height:19px;border-radius:4px;background:#b8bac1"></div>
<div class="abs" style="left:1483px;top:1085.5px;width:8px;height:19px;border-radius:4px;background:#b8bac1"></div>
<div class="abs" style="left:1495px;top:1085.5px;width:8px;height:19px;border-radius:4px;background:#b8bac1"></div>
<div class="abs" style="left:1544px;top:1083.5px;width:218.6px;height:20px;border-radius:4px 0 0 4px;background:#8bc34a"></div>
<div class="t" style="left:1613.3px;width:80px;text-align:center;top:1083.5px;font-size:12.5px;color:#fff;font-weight:bold;">75%</div>
<div class="abs" style="left:1765.7px;top:1083.5px;width:3.7px;height:20px;border-radius:0;background:#673ab7"></div>
<div class="abs" style="left:1772.5px;top:1083.5px;width:71px;height:20px;border-radius:0 4px 4px 0;background:#03a9f4"></div>
<div class="t" style="left:1768.0px;width:80px;text-align:center;top:1083.5px;font-size:12.5px;color:#fff;font-weight:bold;">24%</div>
<div class="abs" style="left:1881.2px;top:1080.2px;width:67.4px;height:23.7px;border:1px solid #fcdca6;border-radius:5px;background:#fff"></div>
<div class="t" style="left:1876.0px;width:80px;text-align:center;top:1083.0px;font-size:13px;color:#f5a623;font-weight:bold;">improve</div>
</body></html>
